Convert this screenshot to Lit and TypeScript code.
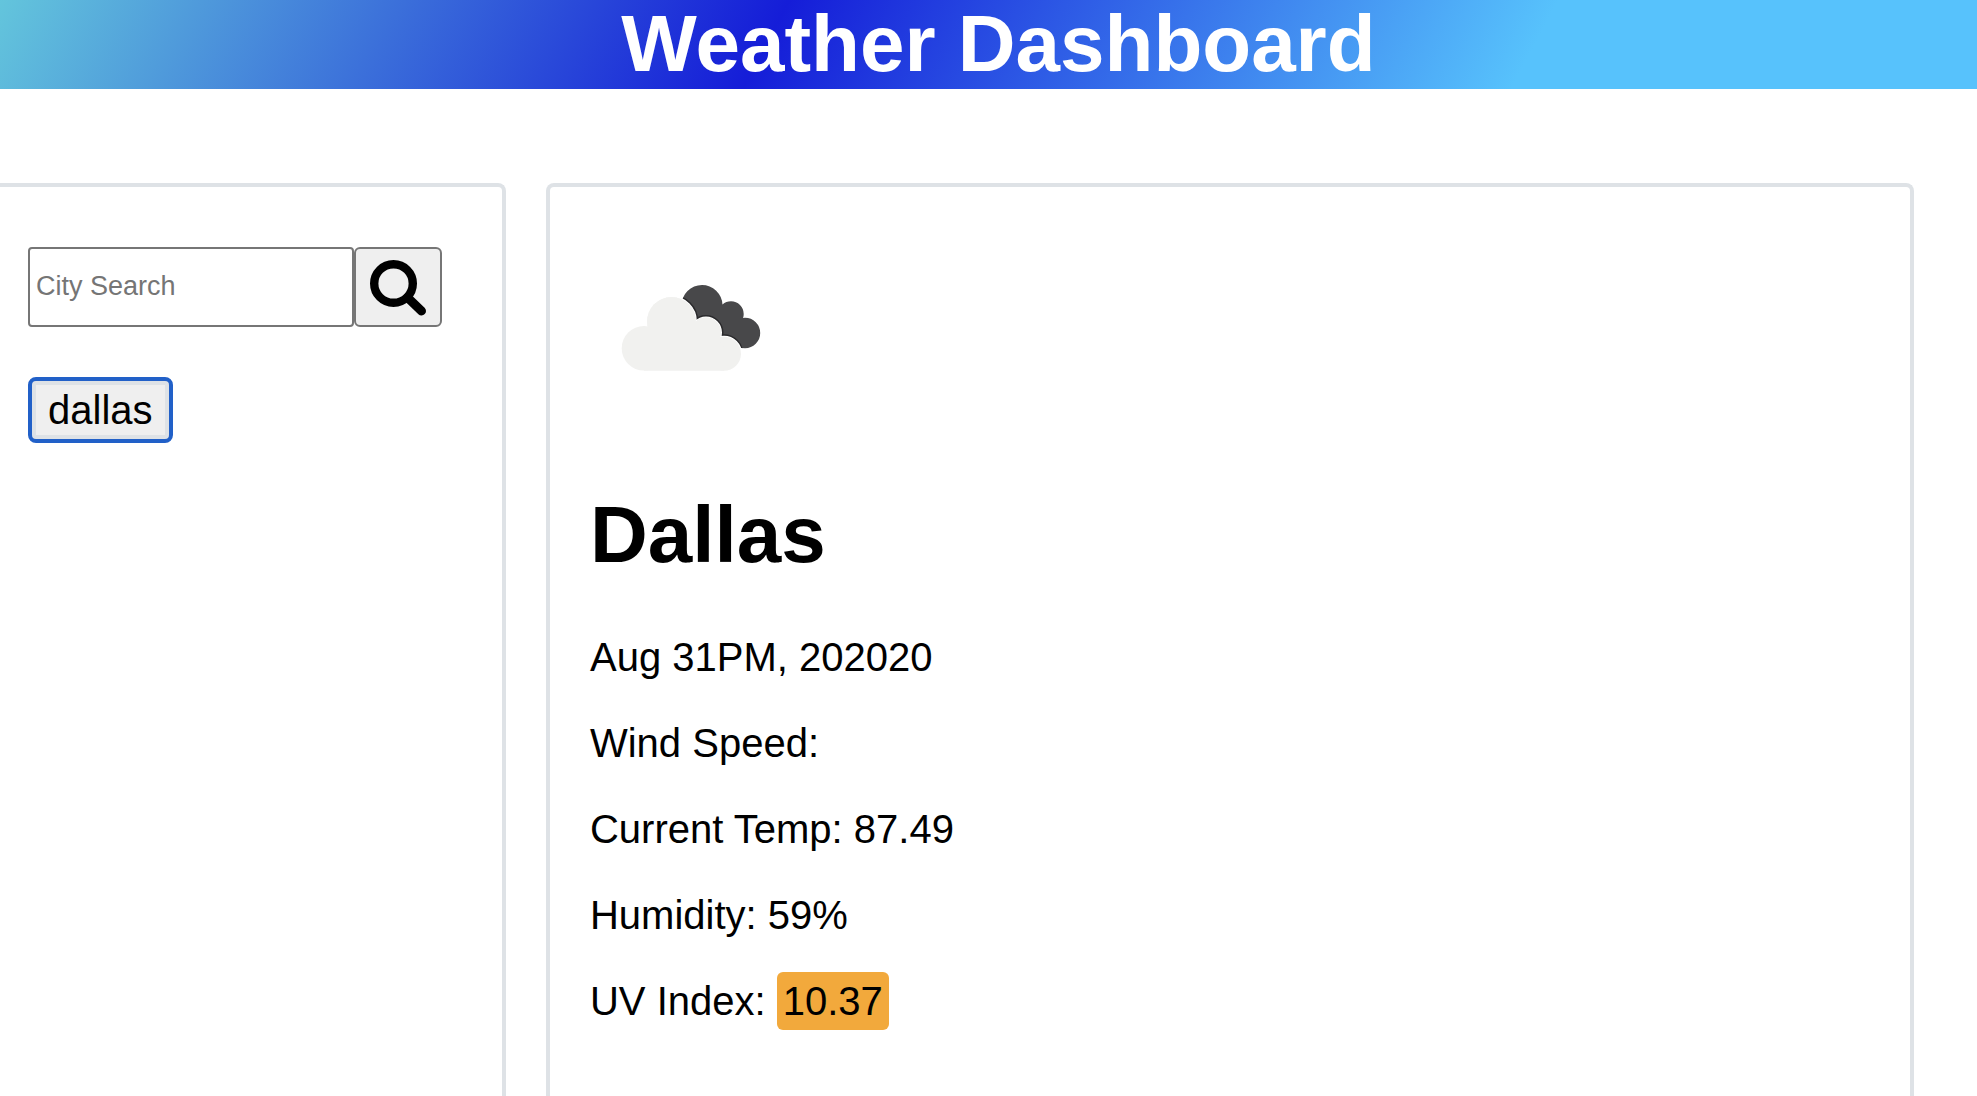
import { LitElement, html, css } from "lit";
import { customElement, state } from "lit/decorators.js";

@customElement("app-root")
export class AppRoot extends LitElement {
  static styles = css`
    :host {
      display: flex;
      flex-direction: column;
      min-height: 100vh;
      background: #fff;
      color: #000;
      font: 40px/46px "Liberation Sans", Arial, sans-serif;
    }
    * {
      box-sizing: border-box;
    }
    .header {
      padding: 1px 0 2px 20px;
      background: linear-gradient(118deg, #63c5dc 0%, #151dd8 39%, #57c2fc 77%);
      color: #fff;
      text-align: center;
    }
    .title {
      margin: 0;
      font-size: 80px;
      line-height: 86px;
    }
    .main {
      flex: 1;
      display: grid;
      grid-template-columns: minmax(0, 27fr) minmax(0, 73fr);
      gap: 40px;
      padding: 94px 63px 0 0;
    }
    .panel {
      border: 4px solid #dee2e6;
      border-bottom: 0;
      border-radius: 8px 8px 0 0;
    }
    .search-panel {
      border-left: 0;
      border-top-left-radius: 0;
      padding: 60px 60px 40px 28px;
    }
    .weather-panel {
      padding: 40px;
    }
    .search {
      display: flex;
      margin-bottom: 50px;
    }
    .field {
      flex: 1;
      min-width: 0;
      height: 80px;
      padding: 0 6px 2px;
      border: 2px solid #767676;
      border-radius: 4px;
      background: #fff;
      color: #000;
      font: inherit;
      font-size: 27px;
    }
    .field::placeholder {
      color: #757575;
      opacity: 1;
    }
    .submit {
      display: flex;
      align-items: center;
      justify-content: center;
      width: 88px;
      height: 80px;
      padding: 0;
      border: 2px solid #767676;
      border-radius: 6px;
      background: #efefef;
      color: #000;
    }
    .glass {
      width: 60px;
      height: 60px;
    }
    .city {
      display: block;
      padding: 6px 16px;
      border: 4px solid #2160c8;
      border-radius: 8px;
      background: #efefef;
      box-shadow: inset 0 0 0 4px #dee2e6;
      color: #000;
      font: inherit;
    }
    .sky {
      display: block;
      width: 200px;
      height: 200px;
      margin-bottom: 62px;
    }
    .name {
      margin: 0 0 53px;
      font-size: 80px;
      line-height: 92px;
    }
    .reading {
      margin: 0 0 40px;
    }
    .uv {
      display: inline-block;
      margin: -6px 0;
      padding: 6px;
      border-radius: 6px;
      background: #f2a93c;
    }
  `;

  @state() private history = ["dallas"];

  render() {
    return html`
      <header class="header"><h1 class="title">Weather Dashboard</h1></header>
      <main class="main">
        <section class="panel search-panel">
          <form class="search" @submit=${(e: Event) => e.preventDefault()}>
            <input class="field" type="text" placeholder="City Search" aria-label="City Search" />
            <button class="submit" type="submit" aria-label="Search">
              <svg class="glass" viewBox="0 0 60 60" fill="none" stroke="currentColor" aria-hidden="true">
                <circle cx="25.5" cy="26.5" r="19.3" stroke-width="8.4" />
                <path d="M39.5 40.5 53.5 54" stroke-width="9" stroke-linecap="round" />
              </svg>
            </button>
          </form>
          ${this.history.map((c) => html`<button class="city" type="button">${c}</button>`)}
        </section>
        <section class="panel weather-panel">
          <svg class="sky" viewBox="0 0 200 200" role="img" aria-label="Broken clouds">
            <defs>
              <clipPath id="rear">
                <circle cx="112" cy="78.5" r="20.5" />
                <circle cx="141" cy="87" r="12.7" />
                <circle cx="155" cy="106" r="15.2" />
                <path d="M112 78H132L141 87L154 92L155 121 140 118 106 100Z" />
              </clipPath>
            </defs>
            <g clip-path="url(#rear)">
              <rect width="200" height="200" fill="#48484a" />
              <g fill="none" stroke="#2a2a2c" stroke-width="5">
                <circle cx="81.5" cy="94.5" r="24.4" />
                <circle cx="116" cy="105.5" r="15" />
                <circle cx="134" cy="126.7" r="17" />
              </g>
            </g>
            <g fill="#f1f1ef" stroke="#fff" stroke-width="2" paint-order="stroke">
              <circle cx="81.5" cy="94.5" r="24.4" />
              <circle cx="116" cy="105.5" r="15" />
              <circle cx="134" cy="126.7" r="17" />
            </g>
            <g fill="#f1f1ef">
              <circle cx="54" cy="121.3" r="22.3" />
              <circle cx="81.5" cy="94.5" r="24.4" />
              <circle cx="116" cy="105.5" r="15" />
              <path d="M54 100H130V115L134 120V143.7H54Z" />
            </g>
          </svg>
          <h2 class="name">Dallas</h2>
          <p class="reading">Aug 31PM, 202020</p>
          <p class="reading">Wind Speed:</p>
          <p class="reading">Current Temp: 87.49</p>
          <p class="reading">Humidity: 59%</p>
          <p class="reading">UV Index: <span class="uv">10.37</span></p>
        </section>
      </main>
    `;
  }
}
